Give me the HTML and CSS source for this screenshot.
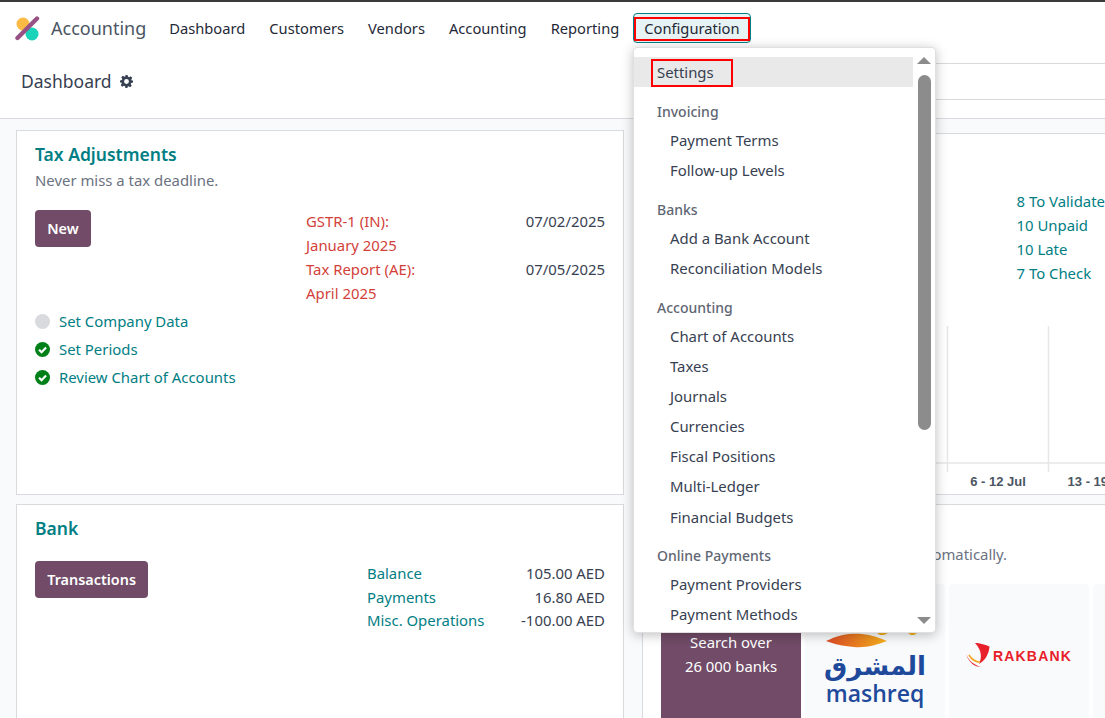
FILE: index.html
```html
<!DOCTYPE html>
<html lang="en">
<head>
  <meta charset="UTF-8" />
  <title>Accounting - Dashboard</title>
  <link rel="stylesheet" href="styles.css">
</head>
<body>

  <header class="navbar">
    <svg class="logo" width="26" height="26" viewBox="0 0 26 26">
      <circle cx="9" cy="9" r="6.5" fill="#fbb945"/>
      <circle cx="18" cy="19" r="6.5" fill="#1ad3bb"/>
      <path d="M23 3.5 L3.5 23" stroke="#985184" stroke-width="4.4" stroke-linecap="round"/>
    </svg>
    <span class="app-name">Accounting</span>
    <nav class="nav-items">
      <a href="#">Dashboard</a>
      <a href="#">Customers</a>
      <a href="#">Vendors</a>
      <a href="#">Accounting</a>
      <a href="#">Reporting</a>
      <a href="#" class="active"><span class="mark">Configuration</span></a>
    </nav>
  </header>

  <div class="control-panel">
    <h1>Dashboard</h1>
    <svg class="gear" width="13" height="13" viewBox="0 0 24 24">
      <path fill="#374151" fill-rule="evenodd" d="M10 0h4l.8 3.4 2 .8 3-1.800 2.800 2.800-1.800 3 .8 2L24 10v4l-3.400.8-.8 2 1.800 3-2.800 2.800-3-1.800-2 .8L14 24h-4l-.8-3.400-2-.8-3 1.800-2.800-2.800 1.800-3-.8-2L0 14v-4l3.400-.8.8-2-1.800-3 2.800-2.800 3 1.800 2-.8zM12 7.500a4.500 4.500 0 1 0 0 9 4.500 4.500 0 0 0 0-9z"/>
    </svg>
    <div class="search-strip"></div>
  </div>

  <main class="dashboard">
    <section class="card tax-card">
      <h2>Tax Adjustments</h2>
      <p class="muted">Never miss a tax deadline.</p>
      <div class="card-row">
        <div class="card-left">
          <button class="btn">New</button>
        </div>
        <div class="deadlines">
          <span class="deadline">GSTR-1 (IN):<br>January 2025</span><span class="value">07/02/2025</span>
          <span class="deadline">Tax Report (AE):<br>April 2025</span><span class="value">07/05/2025</span>
        </div>
      </div>
      <ul class="steps">
        <li><span class="dot"></span>Set Company Data</li>
        <li>
          <svg class="check" width="15" height="15" viewBox="0 0 16 16"><circle cx="8" cy="8" r="8" fill="#008018"/><path d="M4.300 8.200 7 10.800 11.800 5.800" fill="none" stroke="#fff" stroke-width="2.300"/></svg>
          Set Periods
        </li>
        <li>
          <svg class="check" width="15" height="15" viewBox="0 0 16 16"><circle cx="8" cy="8" r="8" fill="#008018"/><path d="M4.300 8.200 7 10.800 11.800 5.800" fill="none" stroke="#fff" stroke-width="2.300"/></svg>
          Review Chart of Accounts
        </li>
      </ul>
    </section>

    <section class="card bills-card">
      <div class="bill-links">
        <a href="#">8 To Validate</a>
        <a href="#">10 Unpaid</a>
        <a href="#">10 Late</a>
        <a href="#">7 To Check</a>
      </div>
      <svg class="chart" width="463" height="170" viewBox="0 0 463 170">
        <path d="M0 137H463" stroke="#d8dadd"/>
        <path d="M304.500 0V146M405.500 0V146" stroke="#e7e7e7" stroke-width="1.500"/>
        <text x="355" y="160" text-anchor="middle">6 - 12 Jul</text>
        <text x="456" y="160" text-anchor="middle">13 - 19 Jul</text>
      </svg>
    </section>

    <section class="card bank-card">
      <h2>Bank</h2>
      <div class="card-row bank-row">
        <div class="card-left">
          <button class="btn">Transactions</button>
        </div>
        <div class="balances">
          <a href="#">Balance</a><span class="value">105.00 AED</span>
          <a href="#">Payments</a><span class="value">16.80 AED</span>
          <a href="#">Misc. Operations</a><span class="value">-100.00 AED</span>
        </div>
      </div>
    </section>

    <section class="card sync-card">
      <p class="muted sync-text">Connect your bank account to sync automatically.</p>
      <div class="bank-tiles">
        <div class="tile tile-search">Search over<br>26 000 banks</div>
        <div class="tile tile-mashreq">
          <svg width="98" height="20" viewBox="0 0 98 20" class="flame">
            <defs>
              <linearGradient id="flameFill">
                <stop offset="0" stop-color="#dd4a26"/>
                <stop offset="1" stop-color="#f5b01c"/>
              </linearGradient>
            </defs>
            <path d="M0 9 C14 2 26 1 36 2 C46 3 54 6 61 9 C50 13 40 16 28 15 C16 14 8 12 0 9Z" fill="url(#flameFill)"/>
            <path d="M51 1 H62 L58 3 H54Z M82 1 H91 L88 3 H85Z" fill="#f5b01c"/>
          </svg>
          <span class="mashreq-ar" lang="ar">المشرق</span>
          <span class="mashreq">mashreq</span>
        </div>
        <div class="tile">
          <div class="rakbank">
            <svg width="24" height="25" viewBox="0 0 24 25">
              <path d="M9 0 C14 0 20 2 23.500 3.500 C23 10 20 17 13 21 C16 15 16 7 9 0Z" fill="#e8202a"/>
              <path d="M0 11 C3 18 8 22 15 24 C9 24 3 20 0 11Z" fill="#e8202a"/>
              <path d="M3 12 C6 17 10 19 14 19" fill="none" stroke="#f6a623" stroke-width="1.500"/>
            </svg>
            <span>RAKBANK</span>
          </div>
        </div>
        <div class="tile"></div>
      </div>
    </section>
  </main>

  <!-- Configuration dropdown -->
  <div class="dropdown">
    <div class="menu-list">
      <a href="#" class="menu-top"><span class="mark">Settings</span></a>

      <div class="menu-head">Invoicing</div>
      <a href="#">Payment Terms</a>
      <a href="#">Follow-up Levels</a>

      <div class="menu-head">Banks</div>
      <a href="#">Add a Bank Account</a>
      <a href="#">Reconciliation Models</a>

      <div class="menu-head">Accounting</div>
      <a href="#">Chart of Accounts</a>
      <a href="#">Taxes</a>
      <a href="#">Journals</a>
      <a href="#">Currencies</a>
      <a href="#">Fiscal Positions</a>
      <a href="#">Multi-Ledger</a>
      <a href="#">Financial Budgets</a>

      <div class="menu-head">Online Payments</div>
      <a href="#">Payment Providers</a>
      <a href="#">Payment Methods</a>
    </div>
    <div class="scrollbar">
      <span class="arrow-up"></span>
      <span class="thumb"></span>
      <span class="arrow-down"></span>
    </div>
  </div>

</body>
</html>
```

FILE: styles.css
```css
* {
  box-sizing: border-box;
  margin: 0;
  padding: 0;
}

html, body {
  height: 718px;
  overflow: hidden;
}

body {
  position: relative;
  background: #fff;
  border-top: 2px solid #3a3a3a;
  font-family: "Noto Sans", "Open Sans", sans-serif;
  font-size: 14.900px;
  color: #374151;
}

a {
  text-decoration: none;
  color: #017e84;
}

/* Navbar */
.navbar {
  display: flex;
  align-items: center;
  height: 52px;
  padding-left: 14px;
}

.logo {
  margin-right: 11px;
}

.app-name {
  font-size: 18px;
  color: #4b5563;
  margin-right: 11px;
}

.nav-items {
  display: flex;
  align-items: center;
  font-size: 14.700px;
}

.nav-items a {
  padding: 0 12px;
  color: #1f2937;
}

.nav-items a.active {
  height: 30px;
  margin-left: 2px;
  padding: 3px 0 0;
  background: #e6f2f3;
  border: 1px solid #017e84;
  border-radius: 4px;
}

.nav-items a.active .mark {
  display: block;
  height: 24px;
  padding: 0 8px;
  line-height: 18px;
}

.mark {
  border: 2px solid #f00;
}

/* Control panel */
.control-panel {
  display: flex;
  align-items: center;
  gap: 8px;
  height: 65px;
  padding: 0 0 10px 21px;
  border-bottom: 1px solid #d8dadd;
}

.control-panel h1 {
  font-size: 17.500px;
  font-weight: 400;
}

.search-strip {
  flex: 1;
  height: 37px;
  margin-left: 500px;
  border-top: 1px solid #d8dadd;
  border-bottom: 1px solid #d8dadd;
}

/* Dashboard grid */
.dashboard {
  display: grid;
  grid-template-columns: 608px 480px;
  grid-template-rows: 365px 240px;
  column-gap: 18px;
  row-gap: 9px;
  height: 600px;
  padding: 11px 0 0 16px;
  background: #f9fafb;
}

.card {
  background: #fff;
  border: 1px solid #d8dadd;
  padding: 11px 18px;
}

.card h2 {
  font-size: 17.500px;
  font-weight: 600;
  line-height: 24px;
  color: #017e84;
}

.muted {
  color: #6b7280;
  line-height: 22px;
  margin-top: 3px;
}

.card-row {
  display: flex;
  justify-content: space-between;
}

.btn {
  padding: 0 12.200px;
  height: 37px;
  background: #714b67;
  border: none;
  border-radius: 4px;
  color: #fff;
  font: 600 14.400px "Noto Sans", "Open Sans", sans-serif;
}

/* Tax card */
.tax-card .card-row {
  margin-top: 19px;
}

.deadlines {
  display: grid;
  grid-template-columns: 1fr auto;
  width: 299px;
  line-height: 23.900px;
}

.deadline {
  color: #d23f3a;
}

.value {
  text-align: right;
}

.steps {
  list-style: none;
  margin-top: 1.400px;
}

.steps li {
  display: flex;
  align-items: center;
  gap: 9px;
  height: 28px;
  color: #017e84;
}

.dot {
  width: 15px;
  height: 15px;
  border-radius: 50%;
  background: #d8dadd;
}

/* Bills card */
.bills-card {
  margin-top: 3px;
  padding: 0;
}

.bill-links {
  display: flex;
  flex-direction: column;
  margin: 55px 0 0 373.500px;
  line-height: 24px;
}

.chart {
  display: block;
  margin-top: 41px;
}

.chart text {
  font: bold 13px "Liberation Sans", sans-serif;
  fill: #4b5563;
}

/* Bank card */
.bank-row {
  margin-top: 21px;
}

.balances {
  display: grid;
  grid-template-columns: 1fr auto;
  width: 238px;
  margin-top: 1px;
  line-height: 23.500px;
}

/* Sync card */
.sync-card {
  padding: 38px 0 0 18px;
  overflow: hidden;
}

.sync-text {
  margin: 0;
}

.bank-tiles {
  display: flex;
  gap: 4px;
  margin-top: 19px;
}

.tile {
  display: flex;
  flex-direction: column;
  align-items: center;
  justify-content: center;
  flex: none;
  width: 140px;
  height: 150px;
  background: #f9fafb;
  border-radius: 4px;
}

.tile-search {
  display: block;
  padding-top: 46px;
  background: #714b67;
  color: #fff;
  text-align: center;
  line-height: 24px;
  border-radius: 0;
}

.tile-mashreq {
  justify-content: flex-start;
  padding-top: 48px;
}

.flame {
  display: block;
}

.mashreq-ar {
  margin-top: 1px;
  font: bold 26px/27px "DejaVu Sans", sans-serif;
  color: #1f4a9c;
}

.mashreq {
  margin-top: 3px;
  font: 600 23px/20px "Open Sans", sans-serif;
  color: #1f4a9c;
}

.rakbank {
  display: flex;
  align-items: center;
  gap: 3px;
  margin-top: -7px;
}

.rakbank span {
  font: 900 14px "Liberation Sans", sans-serif;
  letter-spacing: 1.200px;
  color: #e8202a;
}

/* Dropdown */
.dropdown {
  position: absolute;
  top: 45px;
  left: 633px;
  display: flex;
  width: 303px;
  height: 586px;
  padding-top: 9px;
  background: #fff;
  border: 1px solid #e0e0e0;
  border-radius: 4px;
  box-shadow: 0 2px 12px rgba(0,0,0,0.25);
  overflow: hidden;
}

.menu-list {
  flex: 1;
}

.menu-list a {
  display: block;
  height: 30.200px;
  padding-left: 36px;
  line-height: 30px;
  color: #374151;
}

.menu-list a.menu-top {
  display: flex;
  height: 30px;
  padding-left: 17px;
  background: #e9e9e9;
}

.menu-top .mark {
  display: block;
  width: 82px;
  height: 28px;
  margin-top: 2px;
  padding-left: 4px;
  line-height: 22px;
}

.menu-head {
  height: 27px;
  margin-top: 10.400px;
  padding-left: 23px;
  font-size: 14px;
  font-weight: 500;
  line-height: 28px;
  color: #5f6673;
}

.menu-top + .menu-head {
  margin-top: 11px;
}

.scrollbar {
  display: flex;
  flex-direction: column;
  align-items: center;
  width: 22px;
}

.arrow-up, .arrow-down {
  width: 0;
  height: 0;
  border-left: 7.500px solid transparent;
  border-right: 7.500px solid transparent;
}

.arrow-up {
  border-bottom: 7px solid #8c8c8c;
}

.arrow-down {
  margin-top: 187px;
  border-top: 7px solid #8c8c8c;
}

.thumb {
  width: 13px;
  height: 355px;
  margin-top: 11px;
  background: #8c8c8c;
  border-radius: 7px;
}
```
